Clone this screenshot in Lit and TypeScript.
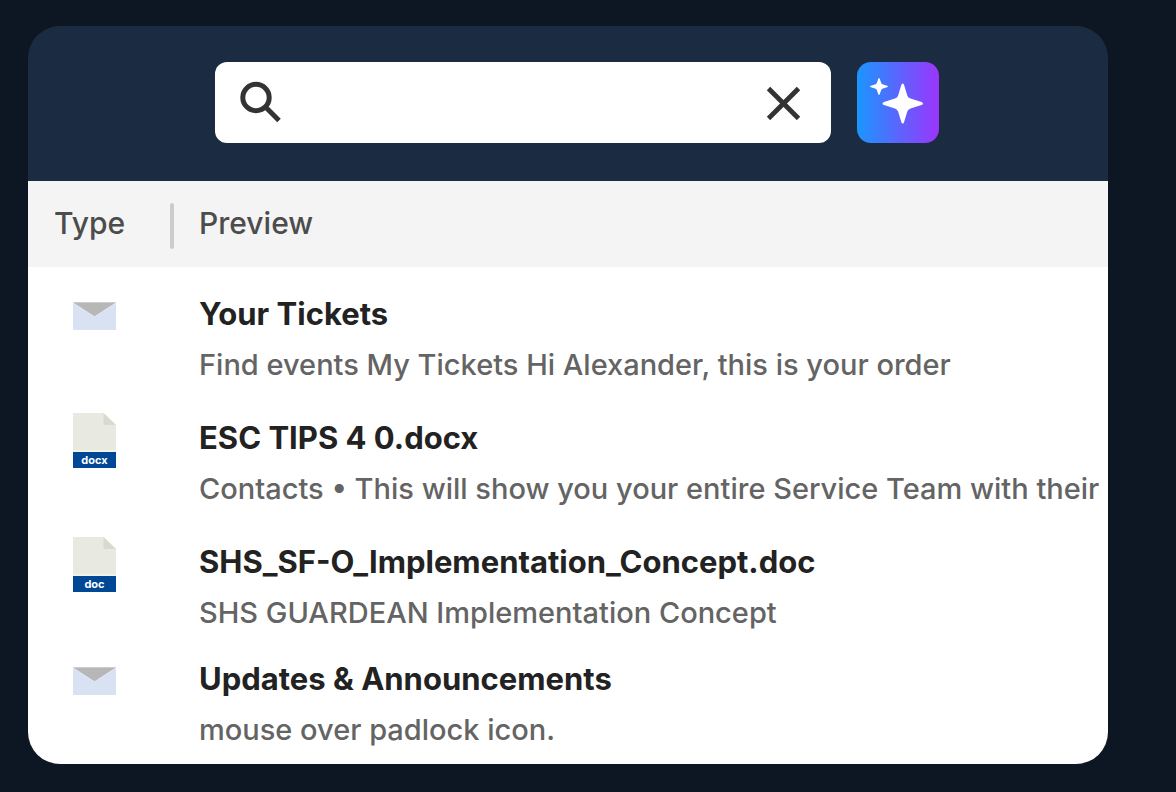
import { LitElement, html, css, svg } from "lit";
import { customElement, property, state } from "lit/decorators.js";
import { classMap } from "lit/directives/class-map.js";

type FileKind = "mail" | "docx" | "doc";

interface Result {
  kind: FileKind;
  title: string;
  preview: string;
}

const RESULTS: Result[] = [
  {
    kind: "mail",
    title: "Your Tickets",
    preview: "Find events My Tickets Hi Alexander, this is your order",
  },
  {
    kind: "docx",
    title: "ESC TIPS 4 0.docx",
    preview: "Contacts • This will show you your entire Service Team with their",
  },
  {
    kind: "doc",
    title: "SHS_SF-O_Implementation_Concept.doc",
    preview: "SHS GUARDEAN Implementation Concept",
  },
  {
    kind: "mail",
    title: "Updates & Announcements",
    preview: "mouse over padlock icon.",
  },
];

@customElement("type-icon")
export class TypeIcon extends LitElement {
  static styles = css`
    :host {
      display: block;
      width: 43px;
    }
    .icon {
      display: block;
      width: 100%;
    }
    .label {
      font: 700 11px Inter, sans-serif;
      fill: #ffffff;
      text-anchor: middle;
    }
  `;

  @property() kind: FileKind = "mail";

  render() {
    if (this.kind === "mail") {
      return html`<svg class="icon" viewBox="0 0 43 28" aria-hidden="true">
        <rect width="43" height="28" fill="#d9e2f3" />
        <path d="M0 .5H43L21.5 14.5Z" fill="#b7b7b7" />
        <path d="M0 1 21.5 14.8 43 1" fill="none" stroke="#e8ecf5" stroke-width=".7" />
      </svg>`;
    }
    return html`<svg class="icon" viewBox="0 0 43 55" aria-hidden="true">
      <path d="M0 0H30.500L43 12V38H0Z" fill="#e8eae1" />
      <path d="M30.500 0 43 12H30.500Z" fill="#d8dacd" />
      <rect y="37" width="43" height="2" fill="#f2f2e6" />
      <rect y="39" width="43" height="16" fill="#004795" />
      ${svg`<text class="label" x="21.5" y="51">${this.kind}</text>`}
    </svg>`;
  }
}

@customElement("search-bar")
export class SearchBar extends LitElement {
  static styles = css`
    :host {
      display: block;
      background: #1b2b42;
    }
    .bar {
      display: flex;
      gap: 26px;
      padding: 36px 169px 38px 187px;
    }
    .field {
      display: flex;
      flex: 1;
      min-width: 0;
      align-items: center;
      padding: 0 24px;
      border-radius: 12px;
      background: #ffffff;
    }
    .glass {
      display: flex;
    }
    .input {
      flex: 1;
      min-width: 0;
      margin: 0 12px;
      padding: 0;
      border: 0;
      outline: 0;
      background: transparent;
      color: #222222;
      font: 500 30px Inter, sans-serif;
    }
    .clear,
    .spark {
      display: flex;
      align-items: center;
      justify-content: center;
      padding: 0;
      border: 0;
      cursor: pointer;
    }
    .clear {
      width: 48px;
      height: 48px;
      background: transparent;
    }
    .spark {
      width: 82px;
      height: 81px;
      border-radius: 14px;
      background: linear-gradient(90deg, #1a96ff, #9b35fc);
    }
  `;

  @state() private query = "";

  render() {
    return html`<form class="bar" role="search" @submit=${(e: Event) => e.preventDefault()}>
      <div class="field">
        <label class="glass" for="query" aria-label="Search">
          <svg width="44" height="44" viewBox="0 0 44 44" aria-hidden="true">
            <g fill="none" stroke="#333333" stroke-width="5">
              <circle cx="17" cy="16.500" r="13.200" />
              <path d="M26.500 26 40 39.500" />
            </g>
          </svg>
        </label>
        <input
          class="input"
          id="query"
          type="text"
          autocomplete="off"
          .value=${this.query}
          @input=${(e: Event) => (this.query = (e.target as HTMLInputElement).value)}
        />
        <button class="clear" type="button" aria-label="Clear" @click=${() => (this.query = "")}>
          <svg width="34" height="34" viewBox="0 0 34 34" aria-hidden="true">
            <path d="M2.500 2.500 32.500 32.500M32.500 2.500 2.500 32.500" stroke="#333333" stroke-width="4.800" />
          </svg>
        </button>
      </div>
      <button class="spark" type="button" aria-label="Ask AI">
        <svg width="82" height="81" viewBox="0 0 82 81" fill="#ffffff" aria-hidden="true">
          <path
            d="M45.700 21.500Q46.700 21.500 47.100 23L50.300 33.500Q51 35.800 53.500 36.600L64.500 40Q66 40.500 66 41.500T64.500 43L53.500 46.400Q51 47.200 50.300 49.500L47.100 60Q46.700 61.500 45.700 61.500T44.300 60L41.100 49.500Q40.400 47.200 37.900 46.400L27 43Q25.500 42.500 25.500 41.500T27 40L37.900 36.600Q40.400 35.800 41.100 33.500L44.300 23Q44.700 21.500 45.700 21.500Z"
          />
          <path
            d="M22 16Q22.500 16 22.700 16.800L24.200 21.100Q24.500 22 25.400 22.300L30 23.800Q31 24.100 31 24.500T30 25.200L25.400 26.700Q24.500 27 24.200 27.900L22.700 32.200Q22.500 33 22 33T21.300 32.200L19.800 27.900Q19.500 27 18.600 26.700L14 25.200Q13 24.900 13 24.500T14 23.800L18.600 22.300Q19.500 22 19.800 21.100L21.300 16.800Q21.500 16 22 16Z"
          />
        </svg>
      </button>
    </form>`;
  }
}

@customElement("app-root")
export class AppRoot extends LitElement {
  static styles = css`
    :host {
      display: block;
      box-sizing: border-box;
      min-height: 100vh;
      padding: 26px 68px 28px 28px;
      background: #0d1623;
      font-family: Inter, sans-serif;
    }
    .card {
      overflow: hidden;
      border-radius: 32px;
    }
    .body {
      padding-bottom: 8px;
      background: #ffffff;
    }
    .results {
      width: 100%;
      border-collapse: collapse;
      table-layout: fixed;
    }
    .type-col {
      width: 171px;
    }
    .head {
      height: 64px;
      padding: 22px 0 0;
      background: #f4f4f4;
      color: #4c4c4c;
      font-size: 30px;
      font-weight: 500;
      line-height: 40px;
      text-align: left;
      vertical-align: top;
    }
    .head-type {
      display: flex;
      align-items: flex-start;
      justify-content: space-between;
      padding: 0 25px 0 26px;
    }
    .rule {
      width: 4px;
      height: 46px;
      border-radius: 2px;
      background: #cccccc;
    }
    .cell {
      padding: 21px 0 1px;
      vertical-align: top;
    }
    .cell-type {
      padding: 22px 0 0 45px;
    }
    .mail {
      padding-top: 35px;
    }
    .last {
      padding-top: 14px;
    }
    .last.mail {
      padding-top: 28px;
    }
    .title,
    .preview {
      margin: 0;
      overflow: hidden;
      white-space: nowrap;
      line-height: 51px;
    }
    .title {
      color: #222222;
      font-size: 31px;
      font-weight: 700;
    }
    .preview {
      color: #646464;
      font-size: 29px;
      font-weight: 500;
    }
  `;

  render() {
    const last = RESULTS.length - 1;
    return html`<main class="card">
      <search-bar></search-bar>
      <div class="body">
        <table class="results">
          <colgroup>
            <col class="type-col" />
            <col />
          </colgroup>
          <thead>
            <tr>
              <th class="head" scope="col">
                <div class="head-type">Type<span class="rule"></span></div>
              </th>
              <th class="head" scope="col">Preview</th>
            </tr>
          </thead>
          <tbody>
            ${RESULTS.map(
              (r, i) => html`<tr>
                <td
                  class=${classMap({
                    cell: true,
                    "cell-type": true,
                    mail: r.kind === "mail",
                    last: i === last,
                  })}
                >
                  <type-icon .kind=${r.kind} role="img" aria-label=${r.kind}></type-icon>
                </td>
                <td class=${classMap({ cell: true, last: i === last })}>
                  <p class="title">${r.title}</p>
                  <p class="preview">${r.preview}</p>
                </td>
              </tr>`
            )}
          </tbody>
        </table>
      </div>
    </main>`;
  }
}
